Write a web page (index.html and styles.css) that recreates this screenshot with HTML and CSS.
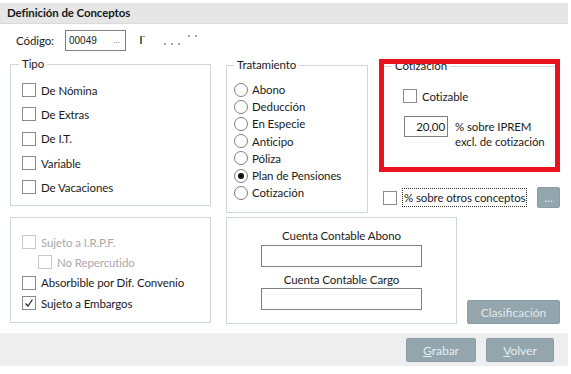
FILE: index.html
```html
<!DOCTYPE html>
<html lang="es">
<head>
  <meta charset="UTF-8">
  <title>Definición de Conceptos</title>
  <link rel="stylesheet" href="styles.css">
</head>
<body>
  <div class="dialog">
    <div class="title">Definición de Conceptos</div>

    <div class="code-row">
      <span class="code-label">Código:</span>
      <div class="code-input"><span>00049</span><span class="more">...</span></div>
      <span class="corner"></span>
      <span class="specks low"><i></i><i></i><i></i></span>
      <span class="specks high"><i></i><i></i></span>
    </div>

    <div class="row-top">
      <fieldset class="group tipo">
        <legend>Tipo</legend>
        <div class="list">
          <label class="check tall"><span class="box"></span>De Nómina</label>
          <label class="check tall"><span class="box"></span>De Extras</label>
          <label class="check tall"><span class="box"></span>De I.T.</label>
          <label class="check tall"><span class="box"></span>Variable</label>
          <label class="check tall"><span class="box"></span>De Vacaciones</label>
        </div>
      </fieldset>

      <fieldset class="group tratamiento">
        <legend>Tratamiento</legend>
        <div class="list">
          <label class="radio"><span class="circle"></span>Abono</label>
          <label class="radio"><span class="circle"></span>Deducción</label>
          <label class="radio"><span class="circle"></span>En Especie</label>
          <label class="radio"><span class="circle"></span>Anticipo</label>
          <label class="radio"><span class="circle"></span>Póliza</label>
          <label class="radio"><span class="circle on"></span>Plan de Pensiones</label>
          <label class="radio"><span class="circle"></span>Cotización</label>
        </div>
      </fieldset>

      <div class="right-col">
        <div class="highlight">
          <fieldset class="group cotizacion">
            <legend>Cotización</legend>
            <div class="list">
              <label class="check"><span class="box"></span>Cotizable</label>
              <div class="iprem-row">
                <div class="num-input">20,00</div>
                <div class="iprem-label">% sobre IPREM<br>excl. de cotización</div>
              </div>
            </div>
          </fieldset>
        </div>
        <div class="otros-row">
          <span class="box"></span>
          <span class="focus-label">% sobre otros conceptos</span>
          <button class="btn mini">...</button>
        </div>
      </div>
    </div>

    <div class="row-bottom">
      <div class="extras">
        <label class="check row20 disabled"><span class="box"></span>Sujeto a I.R.P.F.</label>
        <label class="check row20 disabled sub"><span class="box"></span>No Repercutido</label>
        <label class="check row20"><span class="box"></span>Absorbible por Dif. Convenio</label>
        <label class="check row20"><span class="box"><svg width="12" height="12" viewBox="0 0 12 12"><polyline points="2.5,6.5 5,9 9.5,2.5" fill="none" stroke="#222" stroke-width="1.2"/></svg></span>Sujeto a Embargos</label>
      </div>

      <div class="cuenta">
        <div class="cuenta-label">Cuenta Contable Abono</div>
        <div class="text-input"></div>
        <div class="cuenta-label second">Cuenta Contable Cargo</div>
        <div class="text-input last"></div>
      </div>

      <button class="btn clasif">Clasificación</button>
    </div>

    <div class="footer">
      <button class="btn grabar"><u>G</u>rabar</button>
      <button class="btn volver"><u>V</u>olver</button>
    </div>
  </div>
</body>
</html>
```

FILE: styles.css
```css
* {
  box-sizing: border-box;
}
body {
  margin: 0;
  font-family: Lato, "Noto Sans", sans-serif;
  font-size: 11.5px;
  letter-spacing: -0.1px;
  color: #1b1b1b;
  background-color: #fff;
}
.dialog {
  width: 568px;
}
.title {
  margin-top: 3px;
  height: 21px;
  line-height: 20px;
  padding-left: 7px;
  background-color: #e6e6e6;
  border-bottom: 1px solid #dadada;
  font-weight: bold;
}

/* codigo */
.code-row {
  display: flex;
  align-items: center;
  height: 26px;
  padding: 6px 0 0 16px;
}
.code-label {
  width: 49px;
}
.code-input {
  display: flex;
  justify-content: space-between;
  align-items: center;
  width: 61px;
  height: 21px;
  padding: 0 5px 0 3px;
  border: 1px solid #7f7f7f;
  font-family: "Liberation Sans", Arial, sans-serif;
  font-size: 10px;
  letter-spacing: 0;
}
.code-input .more {
  font-size: 8px;
  color: #444;
}
.corner {
  width: 5px;
  height: 8px;
  margin-left: 14px;
  border-left: 2px solid #7a6748;
  border-top: 1px solid #a39478;
}
.specks {
  display: flex;
  gap: 5px;
}
.specks i {
  width: 2px;
  height: 2px;
  background-color: #a5a5a5;
}
.specks.low {
  margin: 8px 0 0 19px;
}
.specks.high {
  margin: 0 0 8px 8px;
}

/* groups */
.group {
  margin: 0;
  padding: 0;
  min-width: 0;
  border: 1px solid #cfd5d8;
}
.group legend {
  margin-left: 8px;
  padding: 0 3px;
  line-height: 14px;
}
.row-top {
  display: flex;
  align-items: flex-start;
  height: 160px;
  margin-top: 7px;
  padding-left: 10px;
}
.tipo {
  width: 201px;
  height: 149px;
}
.tipo .list {
  padding: 7px 0 0 11px;
}
.tratamiento {
  width: 142px;
  height: 155px;
  margin-left: 15px;
  margin-top: 1px;
}
.tratamiento legend {
  margin-left: 7px;
}
.tratamiento .list {
  padding: 9px 0 0 7px;
}

.check, .radio {
  display: flex;
  align-items: center;
}
.check.tall {
  height: 24.3px;
}
.check.row20 {
  height: 20.3px;
}
.radio {
  height: 17.2px;
}
.box {
  display: flex;
  align-items: center;
  justify-content: center;
  width: 14px;
  height: 14px;
  margin-right: 5px;
  border: 1px solid #8a8a8a;
  background-color: #fff;
}
.circle {
  display: flex;
  align-items: center;
  justify-content: center;
  width: 14px;
  height: 14px;
  margin-right: 4px;
  border: 1px solid #7e7e7e;
  border-radius: 50%;
}
.circle.on::after {
  content: "";
  width: 6px;
  height: 6px;
  border-radius: 50%;
  background-color: #111;
}
.disabled {
  color: #a9a9a9;
}
.disabled .box {
  border-color: #c8c8c8;
}
.sub {
  padding-left: 16px;
}

/* cotizacion */
.right-col {
  width: 181px;
  margin-left: 11px;
  margin-top: 2px;
}
.highlight {
  height: 113px;
  border: 5px solid #e8131f;
  overflow: hidden;
}
.cotizacion {
  margin-top: -5px;
  border: none;
  border-top: 1px solid #d3d8db;
}
.cotizacion .list {
  padding: 16px 0 0 19px;
}
.cotizacion .check {
  height: 14px;
}
.iprem-row {
  display: flex;
  align-items: flex-start;
  margin-top: 13px;
}
.num-input {
  width: 44px;
  height: 21px;
  margin-left: 1px;
  padding-right: 2px;
  border: 1px solid #7f7f7f;
  line-height: 19px;
  text-align: right;
}
.iprem-label {
  margin: 3px 0 0 7px;
  line-height: 15px;
}
.otros-row {
  display: flex;
  align-items: center;
  height: 21px;
  margin-top: 15px;
}
.otros-row .box {
  margin: 0 0 0 4px;
}
.focus-label {
  height: 19px;
  margin-left: 5px;
  padding: 0 1px;
  border: 1px dotted #333;
  line-height: 17px;
}

/* buttons */
.btn {
  padding: 0;
  font-family: Lato, "Noto Sans", sans-serif;
  font-size: 12px;
  color: #e8eef0;
  background-color: #93a5ad;
  border: 1px solid #8b9ca4;
  border-radius: 2px;
}
.btn.mini {
  width: 23px;
  height: 21px;
  margin-left: auto;
  line-height: 12px;
}

/* fila inferior */
.row-bottom {
  display: flex;
  padding-left: 10px;
}
.extras {
  width: 201px;
  height: 106px;
  padding: 14px 0 0 11px;
  border: 1px solid #cfd5d8;
}
.cuenta {
  display: flex;
  flex-direction: column;
  align-items: center;
  width: 231px;
  height: 107px;
  margin-left: 15px;
  padding-top: 10px;
  border: 1px solid #cfd5d8;
}
.cuenta-label {
  line-height: 15px;
}
.cuenta-label.second {
  margin-top: 5px;
}
.text-input {
  width: 161px;
  height: 22px;
  margin-top: 2px;
  border: 1px solid #7f7f7f;
}
.text-input.last {
  margin-top: 1px;
}
.btn.clasif {
  align-self: flex-end;
  width: 93px;
  height: 24px;
  margin-left: 10px;
  color: #e2e9ec;
}

.footer {
  display: flex;
  justify-content: flex-end;
  gap: 10px;
  height: 33px;
  margin-top: 9px;
  padding: 5px 14px 0 0;
  background-color: #eeeeee;
}
.footer .btn {
  height: 24px;
}
.grabar {
  width: 70px;
}
.volver {
  width: 68px;
}
```
